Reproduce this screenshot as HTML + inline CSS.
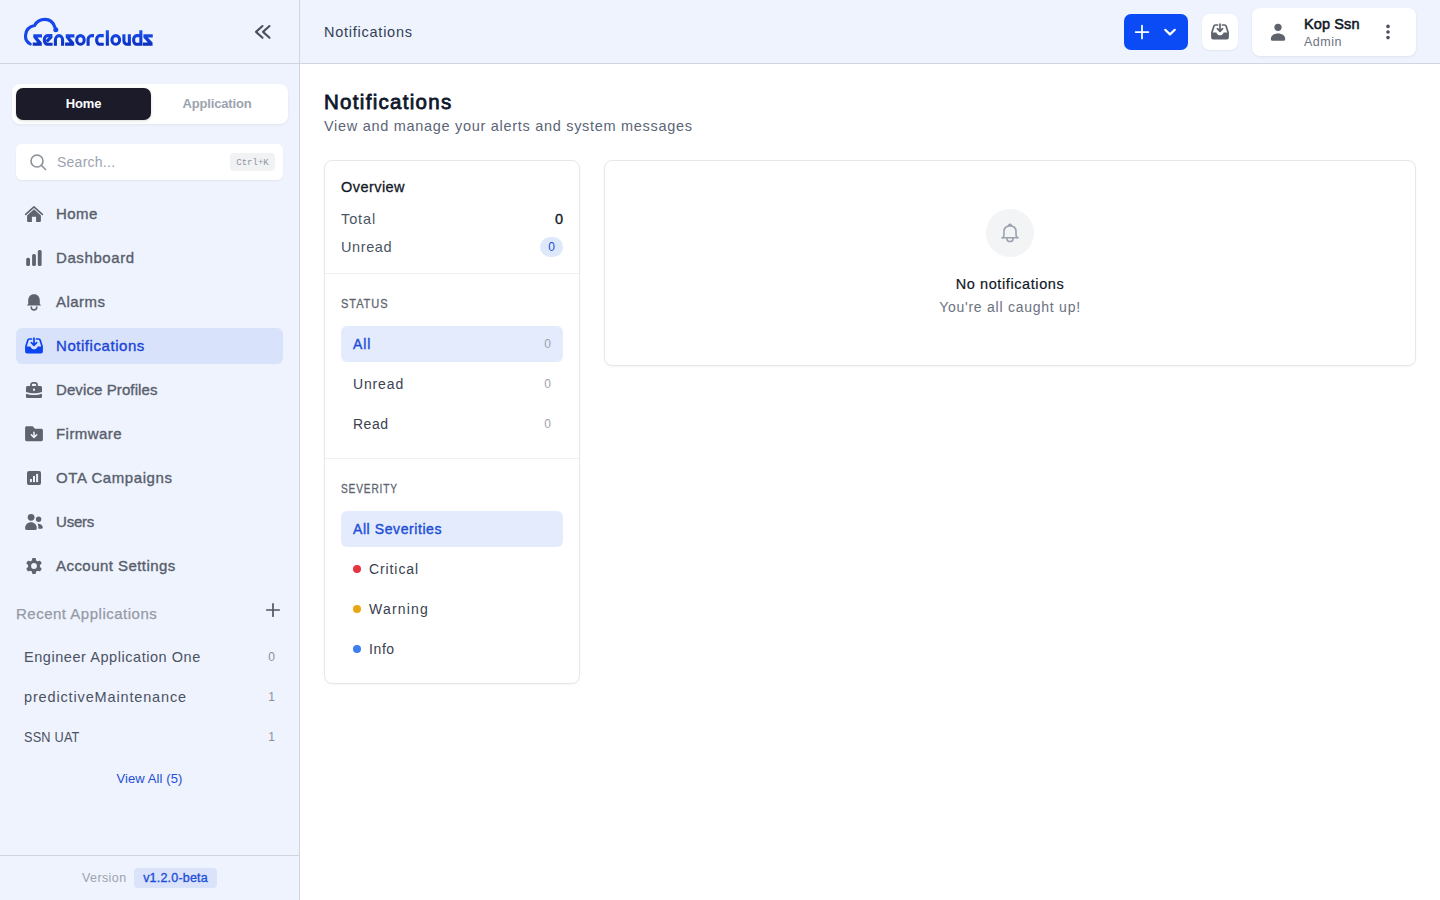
<!DOCTYPE html>
<html><head><meta charset="utf-8">
<style>
*{box-sizing:border-box;margin:0;padding:0}
html,body{width:1440px;height:900px;overflow:hidden;background:#fff;font-family:"Liberation Sans",sans-serif}
.a{position:absolute;white-space:nowrap}
#side{position:absolute;left:0;top:0;width:300px;height:900px;background:#eef3fe;border-right:1px solid #d1d5dd}
#top{position:absolute;left:300px;top:0;width:1140px;height:64px;background:#eef3fe;border-bottom:1px solid #d1d5dd}
.hl{position:absolute;left:0;top:63px;width:300px;height:1px;background:#d1d5dd}
.nav{position:absolute;left:16px;width:267px;height:36px;border-radius:6px}
.nav.act{background:#d9e2fb}
.nt{position:absolute;left:56px;font-size:15px;line-height:20px;color:#585e6b;letter-spacing:0.45px;white-space:nowrap;-webkit-text-stroke-width:0.35px}
.m{-webkit-text-stroke-width:0.3px}
.ico{position:absolute;width:20px;height:20px;left:24px}
.card{position:absolute;background:#fff;border:1px solid #e6e7ea;border-radius:8px;box-shadow:0 1px 2px rgba(0,0,0,0.04)}
.row{position:absolute;left:16px;width:222px;height:36px;border-radius:6px}
.row.act{background:#e4ebfc}
.rt{position:absolute;left:12px;top:8px;font-size:14px;line-height:20px;color:#3a4150;letter-spacing:0.5px;white-space:nowrap}
.rc{position:absolute;right:12px;top:8px;font-size:12px;line-height:20px;color:#9ca3af}
.dot{position:absolute;left:12px;top:14px;width:8px;height:8px;border-radius:50%}
</style></head><body>
<div id="side">
  <div class="hl"></div>
  <!-- logo -->
  <svg class="a" style="left:0;top:0" width="170" height="60" viewBox="0 0 170 60">
    <defs><linearGradient id="lg" gradientUnits="userSpaceOnUse" x1="0" y1="30" x2="0" y2="46"><stop offset="0" stop-color="#1d52f6"/><stop offset="1" stop-color="#0b2fbd"/></linearGradient></defs>
    <path d="M30.3 44 C26.9 42.2 25.3 39 25.5 35.5 C25.8 30 29.5 26.5 34.5 25.5 C37 21 41 19.4 45 19.4 C50 19.4 53.5 23 55 27.5" fill="none" stroke="#1747ea" stroke-width="3.1" stroke-linecap="round"/>
    <circle cx="55.8" cy="29.8" r="2.5" fill="#1747ea"/>
<path d="M33.30 34.2 H42.00 V37.4 H37.49 L41.80 42.4 V45.7 H32.70 V42.5 H37.21 L33.30 37.6 Z" fill="url(#lg)"/><g fill="none" stroke="url(#lg)" stroke-width="3.1"><path d="M52.4 35.6 H47.4 A3.1 4.35 0 0 0 47.4 44.3 H52.6"/><path d="M46.6 41.6 L51.6 36.4"/><path d="M55.4 45.7 V40 A3.6 4.4 0 0 1 62.6 40 V45.7"/></g><path d="M65.70 34.2 H74.40 V37.4 H69.89 L74.20 42.4 V45.7 H65.10 V42.5 H69.61 L65.70 37.6 Z" fill="url(#lg)"/><g fill="none" stroke="url(#lg)" stroke-width="3.1"><ellipse cx="80.45" cy="39.95" rx="3.75" ry="4.35"/><path d="M88.1 45.7 V39.4 A3.6 3.8 0 0 1 91.7 35.6 H94"/><path d="M103.75 35.6 H99.6 A3.0 4.35 0 0 0 99.6 44.3 H103.75"/><path d="M107.35 30.25 V45.7"/><ellipse cx="115.75" cy="39.95" rx="3.85" ry="4.35"/><path d="M123.9 34.2 V40.4 A3.2 3.9 0 0 0 127.1 44.3 H129.35 M129.35 34.2 V45.7"/><path d="M140.85 30.25 V45.7 M140.85 35.6 H136.6 A3.0 4.35 0 0 0 136.6 44.3 H140.85"/></g><path d="M143.40 34.2 H152.75 V37.4 H147.78 L152.55 42.4 V45.7 H142.80 V42.5 H147.77 L143.40 37.6 Z" fill="url(#lg)"/>
  </svg>
  <!-- collapse -->
  <svg class="a" style="left:252px;top:22px" width="20" height="20" viewBox="0 0 20 20"><path d="M10.5 4 L4 9.9 L10.5 15.8 M17.5 4 L11 9.9 L17.5 15.8" fill="none" stroke="#4b5060" stroke-width="2.1" stroke-linecap="round" stroke-linejoin="round"/></svg>
  <!-- toggle -->
  <div class="a" style="left:12px;top:84px;width:276px;height:40px;background:#fff;border-radius:8px;box-shadow:0 1px 3px rgba(0,0,0,0.06)"></div>
  <div class="a" style="left:16px;top:88px;width:135px;height:32px;background:#1c1b29;border-radius:7px;box-shadow:0 1px 3px rgba(0,0,0,0.15)"></div>
  <div class="a" style="left:16px;top:94px;width:135px;text-align:center;font-size:13px;line-height:20px;font-weight:bold;color:#fff;letter-spacing:-0.1px">Home</div>
  <div class="a" style="left:151px;top:94px;width:132px;text-align:center;font-size:13px;line-height:20px;font-weight:bold;color:#9ca3af;letter-spacing:-0.15px">Application</div>
  <!-- search -->
  <div class="a" style="left:16px;top:144px;width:267px;height:36px;background:#fff;border-radius:6px;box-shadow:0 1px 2px rgba(0,0,0,0.06)"></div>
  <svg class="a" style="left:29px;top:153px" width="18" height="18" viewBox="0 0 18 18"><circle cx="8" cy="8" r="6" fill="none" stroke="#8b9099" stroke-width="1.6"/><path d="M12.3 12.3 L16.5 16.5" stroke="#8b9099" stroke-width="1.6" stroke-linecap="round"/></svg>
  <div class="a" style="left:57px;top:152px;font-size:14px;line-height:20px;color:#9ca3af;letter-spacing:0.25px">Search...</div>
  <div class="a" style="left:230px;top:153px;width:45px;height:18px;background:#f1f2f4;border-radius:4px"></div>
  <div class="a" style="left:230px;top:153px;width:45px;text-align:center;font-family:'Liberation Mono',monospace;font-size:9px;line-height:18px;color:#8f96a3;padding-top:1px">Ctrl+K</div>

  <!-- nav -->
  <div class="nav" style="top:196px"></div>
  <svg class="ico" style="top:204px" viewBox="0 0 20 20"><path d="M1.7 10.4 L10 2.9 L18.3 10.4" fill="none" stroke="#5f636c" stroke-width="1.6" stroke-linecap="round" stroke-linejoin="round"/><path d="M3.1 11.4 L10 5.3 L16.9 11.4 V17 Q16.9 18 15.9 18 H12.1 V12.8 H7.9 V18 H4.1 Q3.1 18 3.1 17 Z" fill="#5f636c"/></svg>
  <div class="nt" style="top:204px">Home</div>

  <svg class="ico" style="top:248px" viewBox="0 0 20 20"><rect x="2.2" y="9.7" width="3.8" height="8.3" rx="1.5" fill="#5f636c"/><rect x="8.1" y="6" width="3.8" height="12" rx="1.5" fill="#5f636c"/><rect x="13.8" y="2" width="3.8" height="16" rx="1.5" fill="#5f636c"/></svg>
  <div class="nt" style="top:248px;letter-spacing:0.6px">Dashboard</div>

  <svg class="ico" style="top:292px" viewBox="0 0 20 20"><path d="M10 2.2 C6.3 2.2 4.2 4.8 4.2 8.5 V12 L2.8 13.6 H17.2 L15.8 12 V8.5 C15.8 4.8 13.7 2.2 10 2.2 Z" fill="#5f636c"/><path d="M7.3 14.5 V15.2 A2.7 2.7 0 0 0 12.7 15.2 V14.5" fill="none" stroke="#5f636c" stroke-width="1.6"/></svg>
  <div class="nt" style="top:292px">Alarms</div>

  <div class="nav act" style="top:328px"></div>
  <svg class="ico" style="top:336px" viewBox="0 0 20 20"><path d="M7.6 3 H5.3 C4.6 3 4.1 3.4 3.9 4.1 L1.9 10.6 M12.4 3 H14.7 C15.4 3 15.9 3.4 16.1 4.1 L18.1 10.6" fill="none" stroke="#0a45f0" stroke-width="1.7" stroke-linecap="round" stroke-linejoin="round"/><path d="M1.1 10.4 H6.4 C7 12.3 8.3 13.2 10 13.2 C11.7 13.2 13 12.3 13.6 10.4 H18.9 V15.4 C18.9 16.6 18.1 17.4 16.9 17.4 H3.1 C1.9 17.4 1.1 16.6 1.1 15.4 Z" fill="#0a45f0"/><path d="M10 2 V9 M7.4 6.6 L10 9.3 L12.6 6.6" fill="none" stroke="#0a45f0" stroke-width="1.7" stroke-linecap="round" stroke-linejoin="round"/></svg>
  <div class="nt" style="top:336px;color:#1a45d8;letter-spacing:0.55px">Notifications</div>

  <svg class="ico" style="top:380px" viewBox="0 0 20 20"><path d="M7 6.2 V4.9 C7 3.7 7.9 2.9 9 2.9 H11 C12.1 2.9 13 3.7 13 4.9 V6.2" fill="none" stroke="#5f636c" stroke-width="1.8"/><path d="M3.5 6 H16.5 C17.3 6 18 6.7 18 7.5 V12 C15.5 12.9 12.8 13.3 10 13.3 C7.2 13.3 4.5 12.9 2 12 V7.5 C2 6.7 2.7 6 3.5 6 Z" fill="#5f636c"/><path d="M2 13.7 C4.5 14.6 7.2 15 10 15 C12.8 15 15.5 14.6 18 13.7 V16.4 C18 17.4 17.4 18 16.4 18 H3.6 C2.6 18 2 17.4 2 16.4 Z" fill="#5f636c"/><rect x="9" y="8.7" width="2" height="2" fill="#eef3fe"/></svg>
  <div class="nt" style="top:380px;letter-spacing:0.1px">Device Profiles</div>

  <svg class="ico" style="top:424px" viewBox="0 0 20 20"><path d="M1.1 3.7 C1.1 2.9 1.8 2.2 2.6 2.2 H8.6 L11 4.8 H17.3 C18.2 4.8 18.9 5.5 18.9 6.4 V15.6 C18.9 16.5 18.2 17.2 17.3 17.2 H2.7 C1.8 17.2 1.1 16.5 1.1 15.6 Z" fill="#5f636c"/><path d="M10 8.3 V13.3 M7.4 10.9 L10 13.5 L12.6 10.9" fill="none" stroke="#eef3fe" stroke-width="1.5" stroke-linecap="round" stroke-linejoin="round"/></svg>
  <div class="nt" style="top:424px">Firmware</div>

  <svg class="ico" style="top:468px" viewBox="0 0 20 20"><rect x="3" y="3" width="14" height="14" rx="2" fill="#5f636c"/><rect x="5.9" y="11" width="2" height="3.1" fill="#eef3fe"/><rect x="9" y="8" width="2" height="6.1" fill="#eef3fe"/><rect x="12.1" y="5.9" width="2" height="8.2" fill="#eef3fe"/></svg>
  <div class="nt" style="top:468px;letter-spacing:0.58px">OTA Campaigns</div>

  <svg class="ico" style="top:512px" viewBox="0 0 20 20"><circle cx="7.1" cy="5.3" r="3.4" fill="#5f636c"/><circle cx="14.6" cy="7.3" r="2.7" fill="#5f636c"/><path d="M1.1 16.2 C1.1 12.5 3.8 10.3 6.95 10.3 C10.1 10.3 12.8 12.5 12.8 16.2 C12.8 17.2 12.2 17.9 11.2 17.9 H2.7 C1.7 17.9 1.1 17.2 1.1 16.2 Z" fill="#5f636c"/><path d="M13.6 11.6 C16.6 11.9 18.8 13.6 18.8 15.6 C18.8 16.2 18.4 16.7 17.8 16.7 H14.4 C14.4 14.6 14.2 12.9 13.6 11.6 Z" fill="#5f636c"/></svg>
  <div class="nt" style="top:512px;letter-spacing:-0.2px">Users</div>

  <svg class="ico" style="top:556px" viewBox="0 0 20 20"><g fill="#5f636c"><circle cx="10" cy="10" r="6"/><rect x="8.05" y="1.95" width="3.9" height="4.5" rx="1.1" transform="rotate(0 10 10)"/><rect x="8.05" y="1.95" width="3.9" height="4.5" rx="1.1" transform="rotate(60 10 10)"/><rect x="8.05" y="1.95" width="3.9" height="4.5" rx="1.1" transform="rotate(120 10 10)"/><rect x="8.05" y="1.95" width="3.9" height="4.5" rx="1.1" transform="rotate(180 10 10)"/><rect x="8.05" y="1.95" width="3.9" height="4.5" rx="1.1" transform="rotate(240 10 10)"/><rect x="8.05" y="1.95" width="3.9" height="4.5" rx="1.1" transform="rotate(300 10 10)"/></g><circle cx="10" cy="10" r="2.9" fill="#eef3fe"/></svg>
  <div class="nt" style="top:556px">Account Settings</div>

  <!-- recent apps -->
  <div class="a" style="left:16px;top:604px;font-size:15px;line-height:20px;color:#959aa6;letter-spacing:0.5px;-webkit-text-stroke-width:0.25px">Recent Applications</div>
  <svg class="a" style="left:264px;top:601px" width="18" height="18" viewBox="0 0 18 18"><path d="M9 2.8 V15.2 M2.8 9 H15.2" stroke="#4f5563" stroke-width="1.7" stroke-linecap="round"/></svg>
  <div class="a" style="left:24px;top:647px;font-size:14.5px;line-height:20px;color:#4b5262;letter-spacing:0.55px">Engineer Application One</div>
  <div class="a" style="left:258px;top:647px;width:17px;text-align:right;font-size:12px;line-height:20px;color:#8a909b">0</div>
  <div class="a" style="left:24px;top:687px;font-size:14.5px;line-height:20px;color:#4b5262;letter-spacing:0.85px">predictiveMaintenance</div>
  <div class="a" style="left:258px;top:687px;width:17px;text-align:right;font-size:12px;line-height:20px;color:#8a909b">1</div>
  <div class="a" style="left:24px;top:727px;font-size:14.5px;line-height:20px;color:#4b5262;letter-spacing:0.2px;transform:scaleX(0.88);transform-origin:0 0">SSN UAT</div>
  <div class="a" style="left:258px;top:727px;width:17px;text-align:right;font-size:12px;line-height:20px;color:#8a909b">1</div>
  <div class="a" style="left:0;top:769px;width:299px;text-align:center;font-size:13px;line-height:20px;color:#1d4ed8;letter-spacing:0.1px">View All (5)</div>

  <!-- footer -->
  <div class="a" style="left:0;top:855px;width:299px;height:1px;background:#d1d5dd"></div>
  <div class="a" style="left:82px;top:868px;font-size:12.5px;line-height:20px;color:#9ca3af;letter-spacing:0.4px">Version</div>
  <div class="a" style="left:134px;top:868px;width:83px;height:20px;background:#dbe3fb;border-radius:4px;text-align:center;font-size:12.5px;line-height:20px;color:#1d4ed8;letter-spacing:0.2px;-webkit-text-stroke-width:0.35px">v1.2.0-beta</div>
</div>

<div id="top">
  <div class="a" style="left:24px;top:22px;font-size:14.5px;line-height:20px;color:#334155;letter-spacing:0.75px">Notifications</div>
  <div class="a" style="left:824px;top:14px;width:64px;height:36px;background:#0b4bf5;border-radius:7px"></div>
  <svg class="a" style="left:834px;top:24px" width="16" height="16" viewBox="0 0 16 16"><path d="M8 1.6 V14.4 M1.6 8 H14.4" stroke="#fff" stroke-width="1.75" stroke-linecap="round"/></svg>
  <svg class="a" style="left:862px;top:24px" width="16" height="16" viewBox="0 0 16 16"><path d="M3.2 5.8 L8 10.4 L12.8 5.8" fill="none" stroke="#fff" stroke-width="2.2" stroke-linecap="round" stroke-linejoin="round"/></svg>
  <div class="a" style="left:902px;top:14px;width:36px;height:36px;background:#fff;border-radius:8px;box-shadow:0 1px 2px rgba(0,0,0,0.06)"></div>
  <svg class="a" style="left:910px;top:22px" width="20" height="20" viewBox="0 0 20 20"><path d="M7.6 3 H5.3 C4.6 3 4.1 3.4 3.9 4.1 L1.9 10.6 M12.4 3 H14.7 C15.4 3 15.9 3.4 16.1 4.1 L18.1 10.6" fill="none" stroke="#5f636c" stroke-width="1.7" stroke-linecap="round" stroke-linejoin="round"/><path d="M1.1 10.4 H6.4 C7 12.3 8.3 13.2 10 13.2 C11.7 13.2 13 12.3 13.6 10.4 H18.9 V15.4 C18.9 16.6 18.1 17.4 16.9 17.4 H3.1 C1.9 17.4 1.1 16.6 1.1 15.4 Z" fill="#5f636c"/><path d="M10 2 V9 M7.4 6.6 L10 9.3 L12.6 6.6" fill="none" stroke="#5f636c" stroke-width="1.7" stroke-linecap="round" stroke-linejoin="round"/></svg>
  <div class="a" style="left:952px;top:8px;width:164px;height:48px;background:#fff;border-radius:8px;box-shadow:0 1px 3px rgba(0,0,0,0.07)"></div>
  <svg class="a" style="left:968px;top:22px" width="20" height="20" viewBox="0 0 20 20"><circle cx="10" cy="5.3" r="3.6" fill="#5f636c"/><path d="M2.8 17 C2.8 13.8 6 11.6 10 11.6 C14 11.6 17.2 13.8 17.2 17 C17.2 18.2 16.5 18.8 15.5 18.8 H4.5 C3.5 18.8 2.8 18.2 2.8 17 Z" fill="#5f636c"/></svg>
  <div class="a" style="left:1004px;top:14px;font-size:14.5px;line-height:20px;color:#111827;letter-spacing:0.12px;-webkit-text-stroke-width:0.55px">Kop Ssn</div>
  <div class="a" style="left:1004px;top:32px;font-size:12.5px;line-height:20px;color:#6b7280;letter-spacing:0.5px">Admin</div>
  <svg class="a" style="left:1080px;top:22px" width="16" height="20" viewBox="0 0 16 20"><circle cx="8" cy="4.4" r="1.8" fill="#4b5060"/><circle cx="8" cy="10" r="1.8" fill="#4b5060"/><circle cx="8" cy="15.6" r="1.8" fill="#4b5060"/></svg>
</div>

<!-- main -->
<div class="a" style="left:324px;top:90px;font-size:20.5px;line-height:24px;color:#0f172a;letter-spacing:1.3px;-webkit-text-stroke-width:0.8px">Notifications</div>
<div class="a" style="left:324px;top:116px;font-size:14.5px;line-height:20px;color:#5b6577;letter-spacing:0.7px">View and manage your alerts and system messages</div>

<div class="card" style="left:324px;top:160px;width:256px;height:524px">
  <div class="a" style="left:16px;top:16px;font-size:14.5px;line-height:20px;color:#111827;letter-spacing:0.45px;-webkit-text-stroke-width:0.3px">Overview</div>
  <div class="a" style="left:16px;top:48px;font-size:14.5px;line-height:20px;color:#4b5563;letter-spacing:0.9px">Total</div>
  <div class="a" style="right:16px;top:48px;font-size:14.5px;line-height:20px;color:#111827;-webkit-text-stroke-width:0.35px">0</div>
  <div class="a" style="left:16px;top:76px;font-size:14.5px;line-height:20px;color:#4b5563;letter-spacing:0.6px">Unread</div>
  <div class="a" style="left:215px;top:76px;width:23px;height:20px;background:#dde8fb;border-radius:10px;text-align:center;font-size:12px;line-height:20px;color:#1d4ed8">0</div>
  <div class="a" style="left:0;top:112px;width:254px;height:1px;background:#eef0f2"></div>

  <div class="a" style="left:16px;top:133px;font-size:12px;line-height:20px;color:#5f6672;letter-spacing:1px;-webkit-text-stroke-width:0.3px;transform:scaleX(0.92);transform-origin:0 0">STATUS</div>
  <div class="row act" style="top:165px"><div class="rt" style="color:#1d4ed8;letter-spacing:0.9px;-webkit-text-stroke-width:0.4px">All</div><div class="rc">0</div></div>
  <div class="row" style="top:205px"><div class="rt" style="letter-spacing:0.85px">Unread</div><div class="rc">0</div></div>
  <div class="row" style="top:245px"><div class="rt">Read</div><div class="rc">0</div></div>
  <div class="a" style="left:0;top:297px;width:254px;height:1px;background:#eef0f2"></div>

  <div class="a" style="left:16px;top:318px;font-size:12px;line-height:20px;color:#5f6672;letter-spacing:1px;-webkit-text-stroke-width:0.3px;transform:scaleX(0.845);transform-origin:0 0">SEVERITY</div>
  <div class="row act" style="top:350px"><div class="rt" style="color:#1d4ed8;letter-spacing:0.58px;-webkit-text-stroke-width:0.4px">All Severities</div></div>
  <div class="row" style="top:390px"><div class="dot" style="background:#e5333f"></div><div class="rt" style="left:28px;letter-spacing:0.9px">Critical</div></div>
  <div class="row" style="top:430px"><div class="dot" style="background:#e8a712"></div><div class="rt" style="left:28px;letter-spacing:1.2px">Warning</div></div>
  <div class="row" style="top:470px"><div class="dot" style="background:#3b7ff0"></div><div class="rt" style="left:28px;letter-spacing:0.6px">Info</div></div>
</div>

<div class="card" style="left:604px;top:160px;width:812px;height:206px">
  <div class="a" style="left:381px;top:48px;width:48px;height:48px;border-radius:50%;background:#f3f4f6"></div>
  <svg class="a" style="left:395px;top:62px" width="20" height="21" viewBox="0 0 20 21"><g fill="none" stroke="#9ca3af" stroke-width="1.6" stroke-linecap="round" stroke-linejoin="round"><path d="M2.8 14.6 C3.6 13.8 4 12.6 4 11.2 V8.6 C4 5 6.3 2.9 10 2.9 C13.7 2.9 16 5 16 8.6 V11.2 C16 12.6 16.4 13.8 17.2 14.6"/><path d="M1.9 14.7 H18.1"/><path d="M8.7 2.6 A1.3 1.3 0 0 1 11.3 2.6"/><path d="M6.9 15.4 A3.1 3.1 0 0 0 13.1 15.4"/></g></svg>
  <div class="a" style="left:0;top:113px;width:810px;text-align:center;font-size:14.5px;line-height:20px;color:#111827;letter-spacing:0.6px;-webkit-text-stroke-width:0.2px">No notifications</div>
  <div class="a" style="left:0;top:136px;width:810px;text-align:center;font-size:14px;line-height:20px;color:#6b7280;letter-spacing:0.75px">You're all caught up!</div>
</div>
</body></html>
